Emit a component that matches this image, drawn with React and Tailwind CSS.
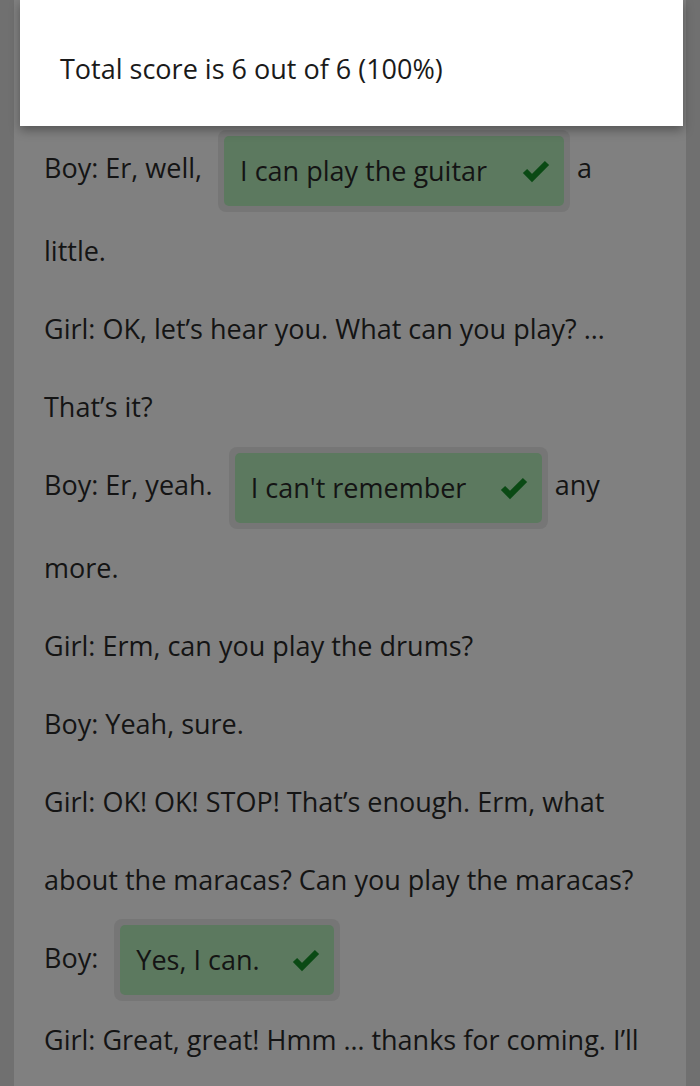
import React from "react";

function Check() {
  return (
    <svg width="28" height="24" viewBox="0 0 28 24" className="inline-block">
      <path d="M3 12 L10 19 L25 4" fill="none" stroke="#0a4a14" strokeWidth="6" strokeLinecap="butt" strokeLinejoin="miter" />
    </svg>
  );
}

function Gap({ text, w }) {
  return (
    <span className="inline-block align-middle rounded-lg bg-[#767676] p-[6px] ml-[9px]">
      <span className={`flex items-center justify-between rounded-[5px] bg-[#5c795f] h-[70px] pl-[16px] pr-[14px] ${w}`}>
        <span>{text}</span>
        <Check />
      </span>
    </span>
  );
}

export default function App() {
  return (
    <div className="relative w-[700px] h-[1086px] overflow-hidden bg-[#707070]" style={{ fontFamily: '"Open Sans", sans-serif' }}>
      <div className="mx-[14px] h-full bg-[#808080] pl-[30px] pr-[30px] pt-[129px] text-[27px] leading-[78px] text-[#141414]">
        <p>Boy: Er, well, <Gap text="I can play the guitar" w="w-[340px]" /> a little.</p>
        <p>Girl: OK, let’s hear you. What can you play? … That’s it?</p>
        <p>Boy: Er, yeah. <Gap text="I can't remember" w="w-[307px]" /> any more.</p>
        <p>Girl: Erm, can you play the drums?</p>
        <p>Boy: Yeah, sure.</p>
        <p>Girl: OK! OK! STOP! That’s enough. Erm, what about the maracas? Can you play the maracas?</p>
        <p>Boy: <Gap text="Yes, I can." w="w-[214px]" /></p>
        <p>Girl: Great, great! Hmm … thanks for coming. I’ll see you later.</p>
      </div>
      <div className="absolute left-[20px] top-0 w-[663px] h-[126px] bg-white shadow-[0_4px_10px_rgba(0,0,0,0.35)] flex items-center pl-[40px] pt-[12px]">
        <span className="text-[27px] text-[#1a1a1a]">Total score is 6 out of 6 (100%)</span>
      </div>
    </div>
  );
}
